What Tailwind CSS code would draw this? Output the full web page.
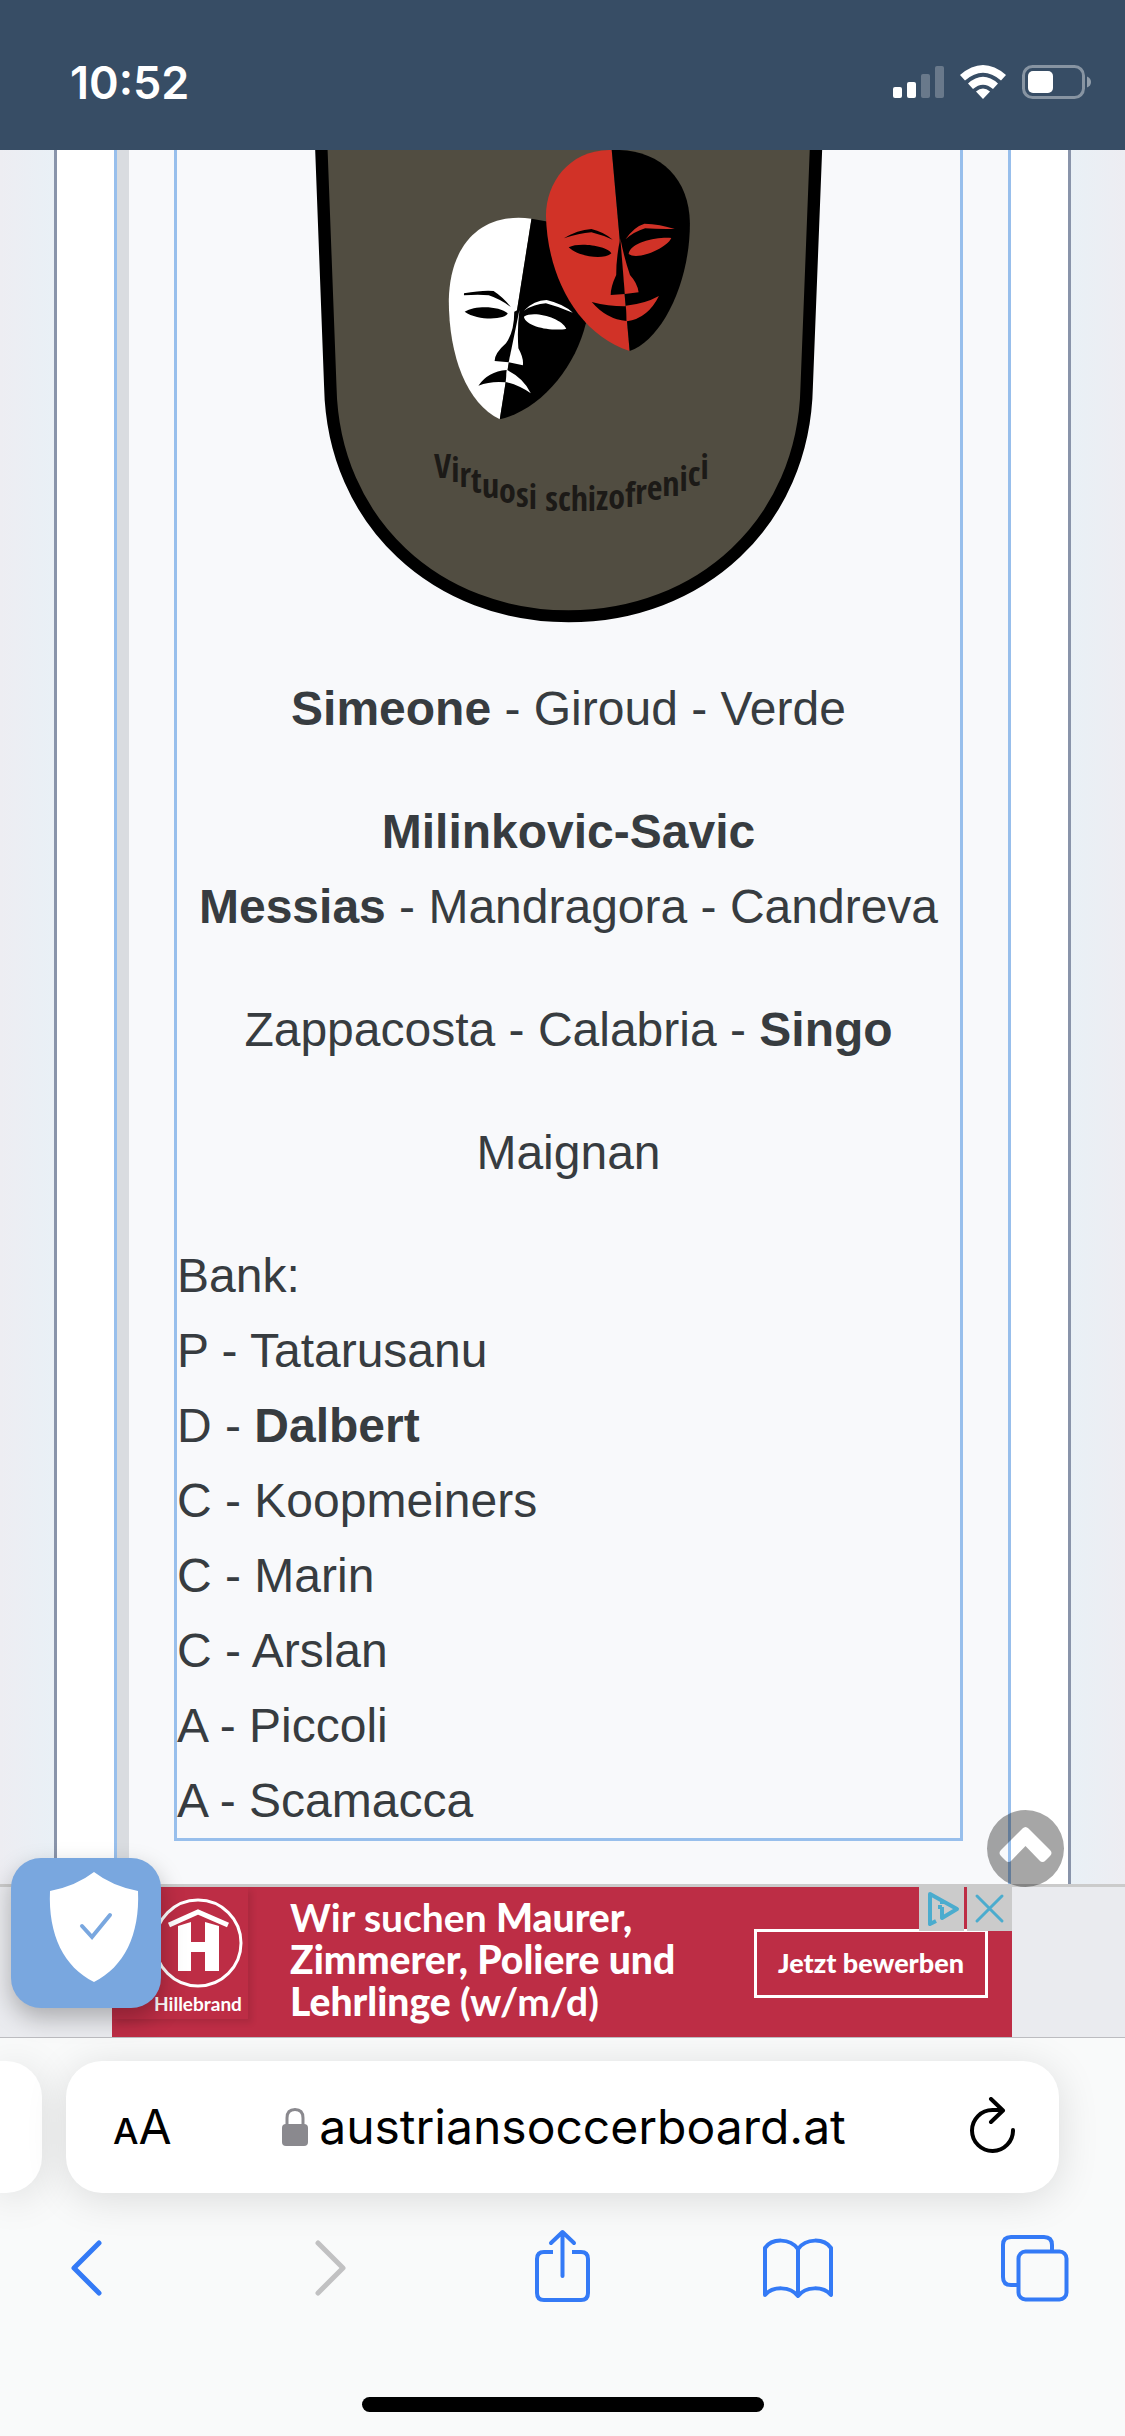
<!DOCTYPE html>
<html lang="de">
<head>
  <meta charset="UTF-8">
  <meta name="viewport" content="width=device-width, initial-scale=1.0">
  <title>austriansoccerboard.at</title>
  <script src="https://cdn.jsdelivr.net/npm/@tailwindcss/browser@4"></script>
</head>
<body class="min-h-screen flex flex-col bg-[#ededf2] overflow-x-hidden font-['Liberation_Sans',Arial,sans-serif]">

  <!-- status bar -->
  <header class="h-[150px] shrink-0 bg-[#374d65] text-white flex items-center justify-between pt-[14px] pl-[70px] pr-[33px]">
    <time class="font-['Inter',sans-serif] font-semibold text-[45px] leading-none">10:52</time>
    <svg class="w-[200px] h-[36px]" viewBox="0 0 200 36" fill="#fff" role="img" aria-label="Signal, WLAN, Akku">
      <rect x="1" y="23" width="9" height="11" rx="2"/>
      <rect x="15" y="18" width="9" height="16" rx="2"/>
      <rect x="29" y="10" width="9" height="24" rx="2" opacity=".25"/>
      <rect x="43" y="2" width="9" height="32" rx="2" opacity=".25"/>
      <path d="M68 11Q91-9 114 11L109 16.500Q91 1 73 16.500Z"/>
      <path d="M76 19.500Q91 6 106 19.500L101 25Q91 16.500 81 25Z"/>
      <path d="M84 27.500Q91 21.500 98 27.500L91 35Z"/>
      <rect x="131.500" y="2.500" width="60" height="31" rx="9" fill="none" stroke="#fff" stroke-width="3" opacity=".4"/>
      <rect x="136" y="7" width="25" height="22" rx="5"/>
      <path d="M195 12.500Q199 14 199 18T195 23.500Z" opacity=".45"/>
    </svg>
  </header>

  <!-- forum post -->
  <main class="relative flex-1 px-[54px] bg-[linear-gradient(to_right,#ededf2,#e9f0f6_54px,#e9f0f6_calc(100%-54px),#ededf2)]">
    <div class="h-full border-x-3 border-[#8994aa] bg-white px-[57px]">
      <article class="h-full border-x-3 border-[#98bfec] bg-[#f8f9fb]">
        <div class="h-full border-l-12 border-[#d9dce0] px-[45px] pb-[43px]">
          <blockquote class="border-3 border-t-0 border-[#98bfec] text-[#373c40] text-[48px] leading-[75px] space-y-12">
            <svg class="block mx-auto w-[537px] h-[473px]" viewBox="0 0 537 473" role="img" aria-label="Vereinswappen">
              <svg width="537" height="473" viewBox="0 30 1559 1419" preserveAspectRatio="none">
                <path d="M61 0L88 740C96 1150 400 1429 780 1429S1463 1150 1471 740L1499 0" fill="#514d41" stroke="#000" stroke-width="36"/>
                <!-- sad mask -->
                <path d="M672 236C520 215 435 320 432 480C432 650 485 790 580 838Z" fill="#fff"/>
                <path d="M672 236L730 247L830 550C800 680 700 810 580 838Z"/>
                <path d="M476 460Q530 450 562 453Q590 472 612 501Q580 477 548 466Q520 462 476 466ZM478 515C510 495 580 498 603 520C600 538 520 545 478 515ZM622 515Q622 575 598 610Q565 640 565 663L606 667L636 508ZM518 737Q545 695 600 690L598 727Q555 722 518 737Z"/>
                <path d="M650 512Q680 480 716 480Q765 492 792 518Q750 500 714 490Q680 492 650 512ZM650 530C680 510 760 535 773 566C740 575 655 562 650 530ZM637 510Q630 570 634 625Q650 655 647 676L606 667ZM601 690Q650 715 670 760Q635 735 597 726Z" fill="#fff"/>
                <!-- smiling mask -->
                <path d="M905 30C780 28 715 130 714 225C717 400 800 580 957 633Z" fill="#d13227"/>
                <path d="M905 30C1040 25 1130 110 1132 250C1132 430 1050 600 957 633Z"/>
                <path d="M766 295Q805 270 846 267Q880 275 908 299Q880 286 846 277Q810 280 766 295ZM780 322C810 305 895 318 904 340C885 360 810 352 780 322ZM930 295Q918 350 918 405Q902 440 902 465L943 462ZM847 486Q900 500 946 499L948 543Q890 538 847 486Z"/>
                <path d="M945 298Q970 260 1000 251Q1045 252 1088 267Q1040 268 1002 265Q970 275 945 298ZM954 342C960 305 1040 290 1078 294C1065 325 980 362 954 342ZM930 295Q940 350 958 405Q980 430 983 457L943 462ZM946 497Q1000 492 1042 468Q1010 535 949 544Z" fill="#d13227"/>
              </svg>
              <!-- motto, upright letters on a sagging baseline -->
              <text class="font-['Open_Sans_Condensed','Open_Sans',sans-serif] font-light" font-size="34" fill="#1c1a17" x="134" y="328 332 337 343 348 353 357 359 359 361 361 361 361 360 359 357 354 350 346 341 336 329">Virtuosi schizofrenici</text>
            </svg>
            <p class="text-center"><strong>Simeone</strong> - Giroud - Verde</p>
            <p class="text-center"><strong>Milinkovic-Savic<br>Messias</strong> - Mandragora - Candreva</p>
            <p class="text-center">Zappacosta - Calabria - <strong>Singo</strong></p>
            <p class="text-center">Maignan</p>
            <p>Bank:<br>P - Tatarusanu<br>D - <strong>Dalbert</strong><br>C - Koopmeiners<br>C - Marin<br>C - Arslan<br>A - Piccoli<br>A - Scamacca</p>
          </blockquote>
        </div>
      </article>
    </div>
    <button class="absolute z-10 right-[61px] -bottom-[3px]" aria-label="Nach oben">
      <svg class="block size-[77px]" viewBox="0 0 77 77" fill="#000" fill-opacity=".35">
        <path fill-rule="evenodd" d="M38.500 0a38.500 38.500 0 1 0 0 77a38.500 38.500 0 0 0 0-77ZM35.500 18.500Q38.500 15.500 41.500 18.500L63 40Q66 43 63 46L58.500 50.500Q55.500 53.500 52.500 50.500L38.500 36L24.500 50.500Q21.500 53.500 18.500 50.500L14 46Q11 43 14 40Z"/>
      </svg>
    </button>
  </main>

  <!-- sticky ad -->
  <aside class="relative shrink-0 border-t-3 border-[#cbcbcb] bg-[#eaebef] pr-px">
    <div class="relative mx-auto w-[900px] h-[150px] bg-[#bd2d45] text-white font-['Lato',sans-serif] flex items-start">
      <div class="h-[132px] w-[136px] pl-[36px] pt-[11px] flex flex-col items-center shadow-[4px_4px_6px_#00000018]">
        <svg class="w-[90px] h-[90px] shrink-0" viewBox="0 0 90 90" fill="none" stroke="#fff">
          <circle cx="45" cy="45" r="43" stroke-width="3"/>
          <path d="M16 27L45 14L75 27" stroke-width="5"/>
          <path d="M25 28L38 24V44H52V24L66 28V73H52V54H38V73H25Z" fill="#fff" stroke="none"/>
        </svg>
        <span class="text-[19px] leading-[32px] font-bold">Hillebrand</span>
      </div>
      <p class="mt-[9px] ml-[42px] text-[39px] leading-[42px] font-black whitespace-nowrap"><span class="font-bold">Wir suchen</span> Maurer,<br>Zimmerer, Poliere und<br>Lehrlinge <span class="font-bold">(w/m/d)</span></p>
      <button class="mt-[42px] ml-auto mr-[24px] w-[234px] h-[69px] border-3 border-white text-[27px] font-black">Jetzt bewerben</button>
      <div class="absolute right-0 top-0 flex gap-[3px]">
        <button class="w-[45px] h-[44px] bg-[#cbcbcb]" aria-label="Datenschutzinfo">
          <svg class="block w-[45px] h-[44px]" viewBox="0 0 45 44" fill="none" stroke="#4bacce" stroke-width="4" stroke-linejoin="round">
            <path d="M17 34L11 37V7L38 22L23 31V20M23 13V17M19 20H23"/>
          </svg>
        </button>
        <button class="w-[45px] h-[44px] bg-[#cbcbcb]" aria-label="Anzeige schließen">
          <svg class="block w-[45px] h-[44px]" viewBox="0 0 45 44" stroke="#4bacce" stroke-width="3" stroke-linecap="round">
            <path d="M10 9L35 34M35 9L10 34"/>
          </svg>
        </button>
      </div>
    </div>
    <button class="absolute left-[11px] -top-[29px] size-[150px] rounded-[30px] bg-[#79a7df] shadow-[0_10px_24px_#00000045]" aria-label="Datenschutz-Einstellungen">
      <svg class="block size-[150px]" viewBox="0 0 150 150">
        <path d="M83 14Q101 28 127 33C129 77 113 109 83 124C53 109 37 77 39 33Q65 28 83 14Z" fill="#fff"/>
        <path d="M71 68L81 79L99 57" fill="none" stroke="#79a7df" stroke-width="4" stroke-linecap="round"/>
      </svg>
    </button>
  </aside>

  <!-- browser toolbar -->
  <footer class="shrink-0 border-t border-[#bcbcc0] bg-[#f9fafa] pt-[23px] pb-[24px] overflow-hidden">
    <div class="flex gap-6 pr-[66px]">
      <div class="w-[42px] h-[132px] rounded-r-[36px] bg-white shadow-[0_6px_40px_#00000020]"></div>
      <div class="flex-1 h-[132px] rounded-[36px] bg-white shadow-[0_6px_40px_#00000020] pl-[47px] pr-[44px] flex items-center justify-between font-['Inter',sans-serif] text-black">
        <button class="w-[57px] flex items-baseline leading-none" aria-label="Textgröße"><span class="text-[36px] font-medium">A</span><span class="text-[48px]">A</span></button>
        <button class="flex items-center gap-[11px]">
          <svg class="w-[26px] h-[38px]" viewBox="0 0 26 38">
            <rect y="16" width="26" height="22" rx="4" fill="#8a898e"/>
            <path d="M5 17V10Q5 1.500 13 1.500T21 10V17" fill="none" stroke="#8a898e" stroke-width="3"/>
          </svg>
          <span class="text-[48px] leading-[60px]">austriansoccerboard.at</span>
        </button>
        <button class="w-[57px] flex justify-end" aria-label="Neu laden">
          <svg class="w-[45px] h-[60px]" viewBox="0 0 45 60" fill="none" stroke="#000" stroke-width="4" stroke-linecap="round" stroke-linejoin="round">
            <path d="M43 33A20.500 20.500 0 1 1 22.500 13H32M21 2L33 13.500L21 25"/>
          </svg>
        </button>
      </div>
    </div>
    <nav class="h-[150px] pl-[47px] pr-[51px] flex items-center justify-between">
      <button aria-label="Zurück">
        <svg class="block size-[80px]" viewBox="0 0 80 80" fill="none" stroke="#347af6" stroke-width="5" stroke-linecap="round" stroke-linejoin="round"><path d="M52 15L27 40L52 65"/></svg>
      </button>
      <button aria-label="Vorwärts" disabled>
        <svg class="block size-[80px]" viewBox="0 0 80 80" fill="none" stroke="#c1c1c2" stroke-width="5" stroke-linecap="round" stroke-linejoin="round"><path d="M34 15L59 40L34 65"/></svg>
      </button>
      <button aria-label="Teilen">
        <svg class="block size-[80px]" viewBox="0 0 80 80" fill="none" stroke="#347af6" stroke-width="4" stroke-linejoin="round">
          <path d="M32 24H23Q16 24 16 31V65Q16 72 23 72H60Q67 72 67 65V31Q67 24 60 24H51"/>
          <path d="M41.500 48V4M30 15L41.500 4L53 15" stroke-linecap="round"/>
        </svg>
      </button>
      <button aria-label="Lesezeichen">
        <svg class="block size-[80px]" viewBox="0 0 80 80" fill="none" stroke="#347af6" stroke-width="4" stroke-linejoin="round">
          <path d="M41 68V21C33 10 15 10 8 20V67C16 58 33 58 41 68C49 58 66 58 74 67V20C67 10 49 10 41 21"/>
        </svg>
      </button>
      <button aria-label="Tabs">
        <svg class="block size-[80px]" viewBox="0 0 80 80" fill="none" stroke="#347af6" stroke-width="4">
          <rect x="24.500" y="23.500" width="48" height="48" rx="7"/>
          <path d="M24 57H17Q9 57 9 49V17Q9 9 17 9H50Q58 9 58 17V23"/>
        </svg>
      </button>
    </nav>
    <div class="mx-auto mt-[54px] w-[402px] h-[15px] rounded-full bg-black"></div>
  </footer>
</body>
</html>
